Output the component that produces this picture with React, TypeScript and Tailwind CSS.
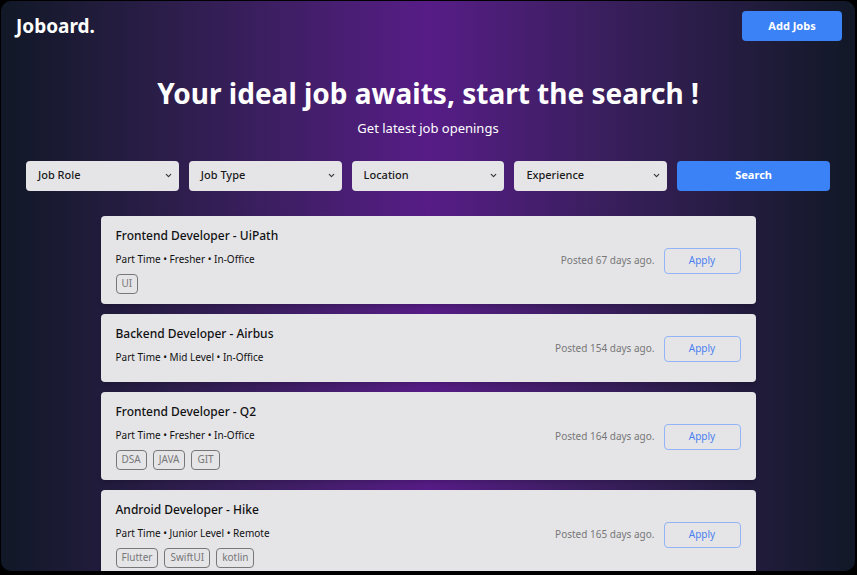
import * as React from 'react'
import { ChevronDown } from 'lucide-react'

interface Job {
  id: number
  title: string
  company: string
  type: string
  level: string
  mode: string
  posted: number
  skills: string[]
}

const JOBS: Job[] = [
  { id: 1, title: 'Frontend Developer', company: 'UiPath', type: 'Part Time', level: 'Fresher', mode: 'In-Office', posted: 67, skills: ['UI'] },
  { id: 2, title: 'Backend Developer', company: 'Airbus', type: 'Part Time', level: 'Mid Level', mode: 'In-Office', posted: 154, skills: [] },
  { id: 3, title: 'Frontend Developer', company: 'Q2', type: 'Part Time', level: 'Fresher', mode: 'In-Office', posted: 164, skills: ['DSA', 'JAVA', 'GIT'] },
  { id: 4, title: 'Android Developer', company: 'Hike', type: 'Part Time', level: 'Junior Level', mode: 'Remote', posted: 165, skills: ['Flutter', 'SwiftUI', 'kotlin'] },
]

const FILTERS = ['Job Role', 'Job Type', 'Location', 'Experience']

function FakeSelect({ label }: { label: string }) {
  return (
    <div className="flex h-[30px] items-center justify-between rounded-[4px] bg-[#e5e5e8] pl-3 pr-[6px] text-[11px] font-medium text-[#1a1a1a]">
      <span>{label}</span>
      <ChevronDown size={9} strokeWidth={3} className="text-[#333]" />
    </div>
  )
}

function JobCard({ job }: { job: Job }) {
  return (
    <div className="flex items-center justify-between rounded-[4px] bg-[#e5e5e8] px-[15px] pb-[10px] pt-3 shadow-md">
      <div className="flex flex-col">
        <h2 className="text-[12px] font-medium leading-4 text-[#111]">
          {job.title} - {job.company}
        </h2>
        <p className="mt-2 text-[10px] leading-[14px] text-[#111]">
          {job.type} • {job.level} • {job.mode}
        </p>
        <div className="mt-2 flex gap-[6px]">
          {job.skills.map(s => (
            <span key={s} className="flex h-5 items-center rounded-[4px] border border-[#777] px-[5px] text-[10px] text-[#777]">
              {s}
            </span>
          ))}
        </div>
      </div>
      <div className="flex items-center gap-[9px]">
        <span className="text-[10px] text-[#777]">Posted {job.posted} days ago.</span>
        <button type="button" className="h-[26px] w-[77px] rounded-[4px] border border-[#93b4f5] text-[10px] text-[#4a80ee]">
          Apply
        </button>
      </div>
    </div>
  )
}

export default function App() {
  return (
    <div className="h-[575px] w-[857px] overflow-hidden bg-black pl-px pr-[2px] pt-px" style={{ fontFamily: '"Noto Sans", "Open Sans", sans-serif' }}>
      <div className="h-[570px] overflow-hidden rounded-[10px] bg-gradient-to-r from-[#111827] via-[#571c87] to-[#111827] text-white">
        {/* header */}
        <header className="flex items-center justify-between pl-[15px] pr-[13px] pt-[10px]">
          <span className="text-[19px] font-bold">Joboard.</span>
          <button type="button" className="h-[30px] w-[100px] rounded-[4px] bg-[#3b82f6] text-[11px] font-bold text-white">
            Add Jobs
          </button>
        </header>

        {/* hero */}
        <section className="mt-[34px] flex flex-col items-center">
          <h1 className="text-[28px] font-bold leading-9">Your ideal job awaits, start the search !</h1>
          <p className="mt-[8px] text-[13px]">Get latest job openings</p>
        </section>

        {/* filters */}
        <section className="mt-[22px] grid grid-cols-5 gap-[10px] px-[25px]">
          {FILTERS.map(f => <FakeSelect key={f} label={f} />)}
          <button type="button" className="h-[30px] rounded-[4px] bg-[#3b82f6] text-[11px] font-bold text-white">
            Search
          </button>
        </section>

        {/* jobs */}
        <section className="mx-auto mt-[25px] flex w-[655px] flex-col gap-[10px]">
          {JOBS.map(j => <JobCard key={j.id} job={j} />)}
        </section>
      </div>
    </div>
  )
}
